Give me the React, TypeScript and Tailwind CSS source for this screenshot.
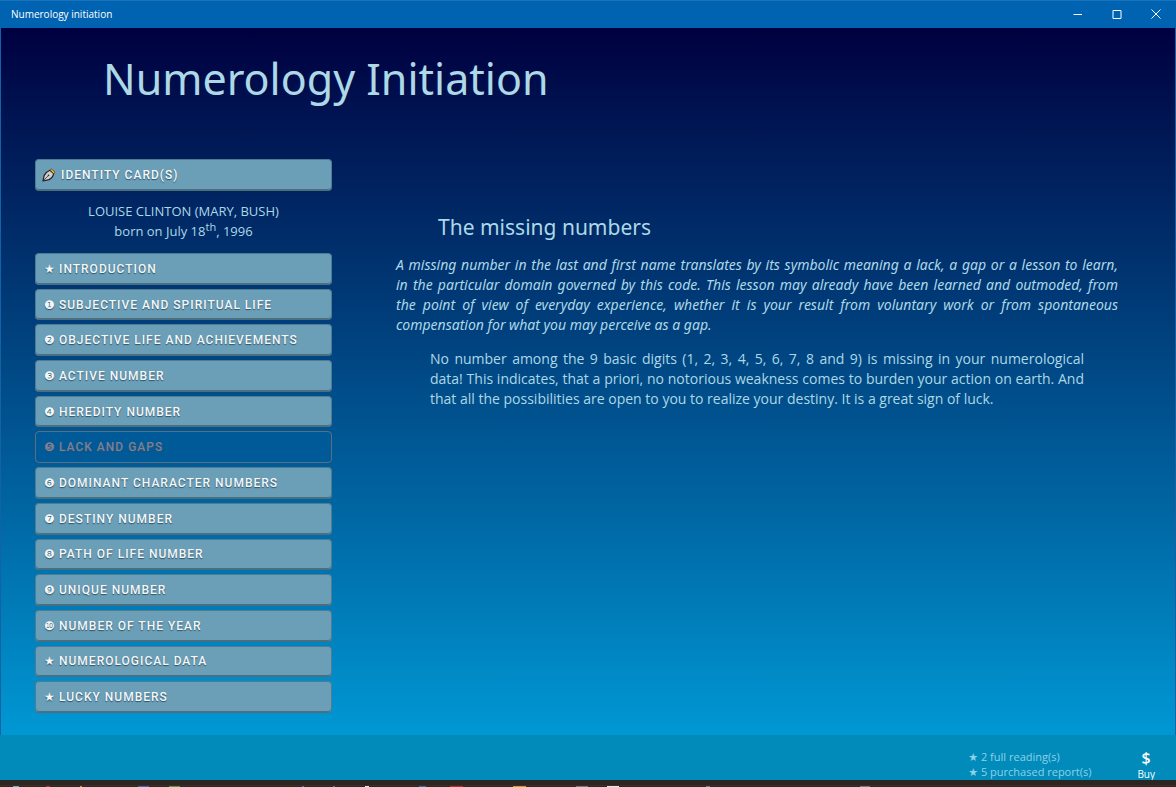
import { clsx } from 'clsx';

interface Chapter {
  mark: string;
  label: string;
  current?: boolean;
}

const chapters: Chapter[] = [
  { mark: '★', label: 'INTRODUCTION' },
  { mark: '❶', label: 'SUBJECTIVE AND SPIRITUAL LIFE' },
  { mark: '❷', label: 'OBJECTIVE LIFE AND ACHIEVEMENTS' },
  { mark: '❸', label: 'ACTIVE NUMBER' },
  { mark: '❹', label: 'HEREDITY NUMBER' },
  { mark: '❺', label: 'LACK AND GAPS', current: true },
  { mark: '❻', label: 'DOMINANT CHARACTER NUMBERS' },
  { mark: '❼', label: 'DESTINY NUMBER' },
  { mark: '❽', label: 'PATH OF LIFE NUMBER' },
  { mark: '❾', label: 'UNIQUE NUMBER' },
  { mark: '❿', label: 'NUMBER OF THE YEAR' },
  { mark: '★', label: 'NUMEROLOGICAL DATA' },
  { mark: '★', label: 'LUCKY NUMBERS' },
];

const buttonBase =
  "flex w-full items-center rounded border text-left font-['Roboto',Arial,sans-serif] text-[12px] leading-4 font-medium tracking-[1px] [text-shadow:0_1px_1px_#2f5266]";
const buttonRaised = 'border-[#4f7c93] border-b-[#4c6f80] bg-[#6b9eb7] text-[#f4f8fa] shadow-[inset_0_-1px_0_#4c6f80]';

function PenIcon() {
  return (
    <svg className="size-[14px]" viewBox="0 0 14 14" aria-hidden="true">
      <path d="M1 13 L2.2 7.4 Q4.5 3.4 8 2.2 L11.6 5.6 Q11 9.6 7 11.6 Z" fill="#cfcfcf" stroke="#222" strokeWidth="1.2" strokeLinejoin="round" />
      <path d="M8.2 2.2 L9.8 1 L13 4.2 L11.8 5.8 Z" fill="#ffb01f" stroke="#33291a" strokeWidth="0.6" strokeLinejoin="round" />
      <path d="M1.4 12.6 L6.2 7.8" stroke="#333" strokeWidth="0.8" />
      <circle cx="6.5" cy="7.4" r="0.8" fill="#333" />
    </svg>
  );
}

function TitleBar() {
  return (
    <header className="flex h-7 items-center justify-between border-t border-[#1a72bb] bg-[#0063b1] pb-px pl-[11px] text-white">
      <span className="text-[10px] leading-4">Numerology initiation</span>
      <div className="flex h-full pr-px">
        <button className="flex w-[39px] items-center justify-center" aria-label="Minimize">
          <svg className="size-[10px]" viewBox="0 0 10 10" stroke="currentColor" fill="none">
            <path d="M0.5 5.5 H9" />
          </svg>
        </button>
        <button className="flex w-[39px] items-center justify-center" aria-label="Maximize">
          <svg className="size-[10px]" viewBox="0 0 10 10" stroke="currentColor" fill="none">
            <path d="M1 1.5 H9 V9.5 H1 Z" />
          </svg>
        </button>
        <button className="flex w-[39px] items-center justify-center" aria-label="Close">
          <svg className="size-[10px]" viewBox="0 0 10 10" stroke="currentColor" fill="none">
            <path d="M0.5 0.5 L9.5 9.5 M9.5 0.5 L0.5 9.5" />
          </svg>
        </button>
      </div>
    </header>
  );
}

function Sidebar() {
  return (
    <nav className="flex w-[297px] shrink-0 flex-col">
      <button className={clsx(buttonBase, buttonRaised, 'h-8 gap-[5px] px-[6px]')}>
        <PenIcon />
        IDENTITY CARD(S)
      </button>

      <p className="pt-[10px] pb-3 text-center text-[13px] leading-5">
        LOUISE CLINTON (MARY, BUSH)
        <br />
        born on July 18<sup className="text-[11px]">th</sup>, 1996
      </p>

      <ul className="grid flex-1 auto-rows-fr gap-1">
        {chapters.map(({ mark, label, current }) => (
          <li key={label} className="flex">
            <button
              disabled={current}
              className={clsx(buttonBase, 'px-2', current ? 'border-[#5a7080] bg-[#005a98] text-[#7a8099]' : buttonRaised)}
            >
              <span className="w-[15px] font-['DejaVu_Sans',sans-serif] text-[12px] tracking-normal">{mark}</span>
              {label}
            </button>
          </li>
        ))}
      </ul>
    </nav>
  );
}

function Taskbar() {
  return (
    <svg className="block h-[7px] w-full bg-[#2b2622]" preserveAspectRatio="none" viewBox="0 0 1176 7" aria-hidden="true">
      <path d="M0 5.5 H1176" stroke="#3b3029" />
      <path d="M13 6.5 h6" stroke="#3fb9c4" />
      <path d="M46 6.5 h4 M450 6.5 h13" stroke="#d02020" />
      <path d="M80 6.5 h2 M513 6.5 h13" stroke="#d8981f" />
      <path d="M138 6.5 h11 M419 6.5 h7" stroke="#2d6cb5" />
      <path d="M169 6.5 h11" stroke="#4e9a2e" />
      <path d="M302 6.5 h2 M333 6.5 h2" stroke="#7a5aa8" />
      <path d="M365 6.5 h4 M607 6.5 h12" stroke="#e8e8e8" />
      <path d="M576 6.5 h12 M706 6.5 h4 M860 6.5 h10" stroke="#73777f" />
    </svg>
  );
}

export default function App() {
  return (
    <div className="flex min-h-screen flex-col font-['Open_Sans','Noto_Sans',sans-serif] text-[#add8e6]">
      <TitleBar />

      <div className="flex flex-1 flex-col border-x border-x-[#1262a5] bg-linear-to-b from-[#000040] to-[#0098d4]">
        <h1 className="pt-[19px] pb-px pl-[102px] font-['Noto_Sans',sans-serif] text-[43px] leading-[64px]">
          Numerology Initiation
        </h1>

        <div className="flex flex-1 gap-16 pt-[47px] pr-[57px] pb-[22px] pl-[34px]">
          <Sidebar />

          <main className="min-w-0 flex-1 pt-[52px] text-justify text-[14px] leading-5">
            <h2 className="pl-[42px] font-['Noto_Sans',sans-serif] text-[21px] leading-8">The missing numbers</h2>
            <p className="pt-3 font-['Noto_Sans',sans-serif] italic">
              A missing number in the last and first name translates by its symbolic meaning a lack, a gap or a lesson to
              learn, in&nbsp;the particular domain governed by this code. This lesson may already have been learned and
              outmoded, from the&nbsp;point of view of everyday experience, whether it is your result from voluntary work or
              from spontaneous compensation for what you may perceive as a gap.
            </p>
            <p className="px-[34px] pt-[14px]">
              No number among the 9 basic digits (1, 2, 3, 4, 5, 6, 7, 8 and 9) is missing in your numerological
              data!&nbsp;This indicates, that a priori, no notorious weakness comes to burden your action on earth. And that
              all the possibilities are open to you to realize your destiny. It is a great sign of luck.
            </p>
          </main>
        </div>
      </div>

      <footer className="flex h-[45px] justify-end bg-[#008bbb] pt-[13px] pr-[21px]">
        <div className="mr-[46px] pt-[2px] text-[11px] leading-[14px] text-[#8fd0e6]">
          <p>
            <span className="font-['DejaVu_Sans',sans-serif]">★</span> 2 full reading(s)
          </p>
          <p>
            <span className="font-['DejaVu_Sans',sans-serif]">★</span> 5 purchased report(s)
          </p>
        </div>
        <button className="flex flex-col items-center self-start text-[10px] leading-3 text-white">
          <span className="text-base leading-5 font-semibold">$</span>
          Buy
        </button>
      </footer>

      <Taskbar />
    </div>
  );
}
